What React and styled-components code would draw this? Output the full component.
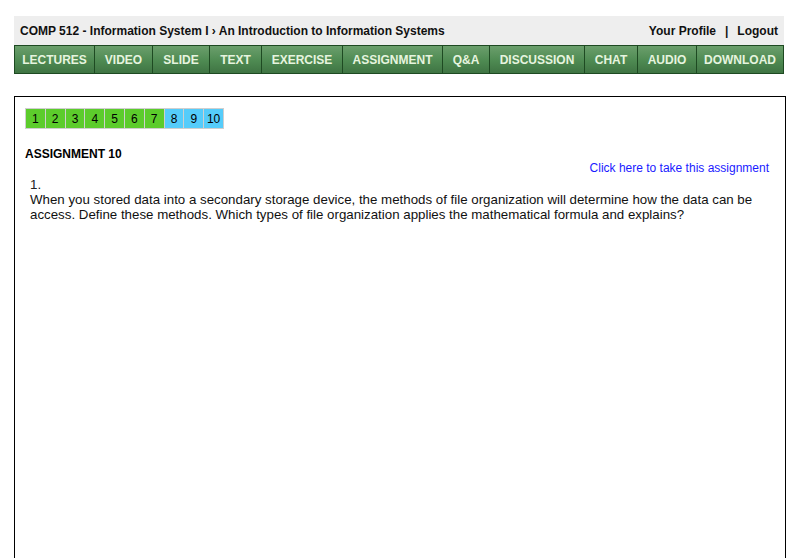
import React from 'react';
import styled, { createGlobalStyle } from 'styled-components';

const GlobalStyle = createGlobalStyle`
    body {
        margin: 0;
        background: #fff;
        font-family: "Liberation Sans", Arial, sans-serif;
    }
`;

const Page = styled.div`
    padding: 16px 19px 0 14px;
    width: 772px;
`;

const TopBar = styled.div`
    display: flex;
    justify-content: space-between;
    align-items: center;
    width: 770px;
    height: 29px;
    background: #eeeeee;
    font-size: 12px;
    font-weight: bold;
    color: #111;
    box-sizing: border-box;
    padding: 0 6px;
`;

const UserLinks = styled.div`
    display: flex;
    gap: 9px;
`;

const NavBar = styled.nav`
    display: flex;
    width: 770px;
    height: 29px;
`;

const NavButton = styled.a`
    display: flex;
    align-items: center;
    justify-content: center;
    width: ${props => props.w}px;
    box-sizing: border-box;
    border: 1px solid #1e4a22;
    border-left-width: ${props => props.first ? 1 : 0}px;
    background: linear-gradient(#6b9f6c, #4e8a52 55%, #3f7443);
    color: #e6f4df;
    font-size: 12px;
    font-weight: bold;
    text-decoration: none;
`;

const ContentBox = styled.div`
    margin-top: 22px;
    width: 772px;
    height: 500px;
    border: 1px solid #000;
    border-bottom: none;
    box-sizing: border-box;
    padding: 11px 16px 0 10px;
`;

const Pager = styled.div`
    display: flex;
    border: 1px solid #cfcfcf;
    width: max-content;
`;

const PageCell = styled.span`
    width: 18.8px;
    height: 19px;
    display: flex;
    align-items: center;
    justify-content: center;
    background: ${props => props.done ? '#5ccc2c' : '#55ccfa'};
    border-left: ${props => props.first ? 'none' : '1px solid #cfcfcf'};
    font-size: 12px;
    color: #000;
`;

const Title = styled.h3`
    margin: 18px 0 0 0;
    font-size: 12px;
    font-weight: bold;
`;

const TakeLink = styled.a`
    display: block;
    text-align: right;
    font-size: 12px;
    color: #1a1aff;
    text-decoration: none;
`;

const Question = styled.div`
    margin: 2px 0 0 5px;
    font-size: 13.3px;
    line-height: 15px;
    color: #111;
`;

const Number = styled.div`
    color: #222;
`;

const navItems = [
    ['LECTURES', 81], ['VIDEO', 58], ['SLIDE', 57], ['TEXT', 52],
    ['EXERCISE', 81], ['ASSIGNMENT', 100], ['Q&A', 47], ['DISCUSSION', 95],
    ['CHAT', 53], ['AUDIO', 59], ['DOWNLOAD', 87],
];

export default function App() {
    return (
        <Page>
            <GlobalStyle />
            <TopBar>
                <span>COMP 512 - Information System I › An Introduction to Information Systems</span>
                <UserLinks>
                    <span>Your Profile</span>
                    <span>|</span>
                    <span>Logout</span>
                </UserLinks>
            </TopBar>
            <NavBar>
                {navItems.map(([label, w], i) => (
                    <NavButton key={label} w={w} first={i === 0} href="#">{label}</NavButton>
                ))}
            </NavBar>
            <ContentBox>
                <Pager>
                    {[1, 2, 3, 4, 5, 6, 7, 8, 9, 10].map(n => (
                        <PageCell key={n} done={n <= 7} first={n === 1}>{n}</PageCell>
                    ))}
                </Pager>
                <Title>ASSIGNMENT 10</Title>
                <TakeLink href="#">Click here to take this assignment</TakeLink>
                <Question>
                    <Number>1.</Number>
                    When you stored data into a secondary storage device, the methods of file organization will determine how the data can be access. Define these methods. Which types of file organization applies the mathematical formula and explains?
                </Question>
            </ContentBox>
        </Page>
    );
}
